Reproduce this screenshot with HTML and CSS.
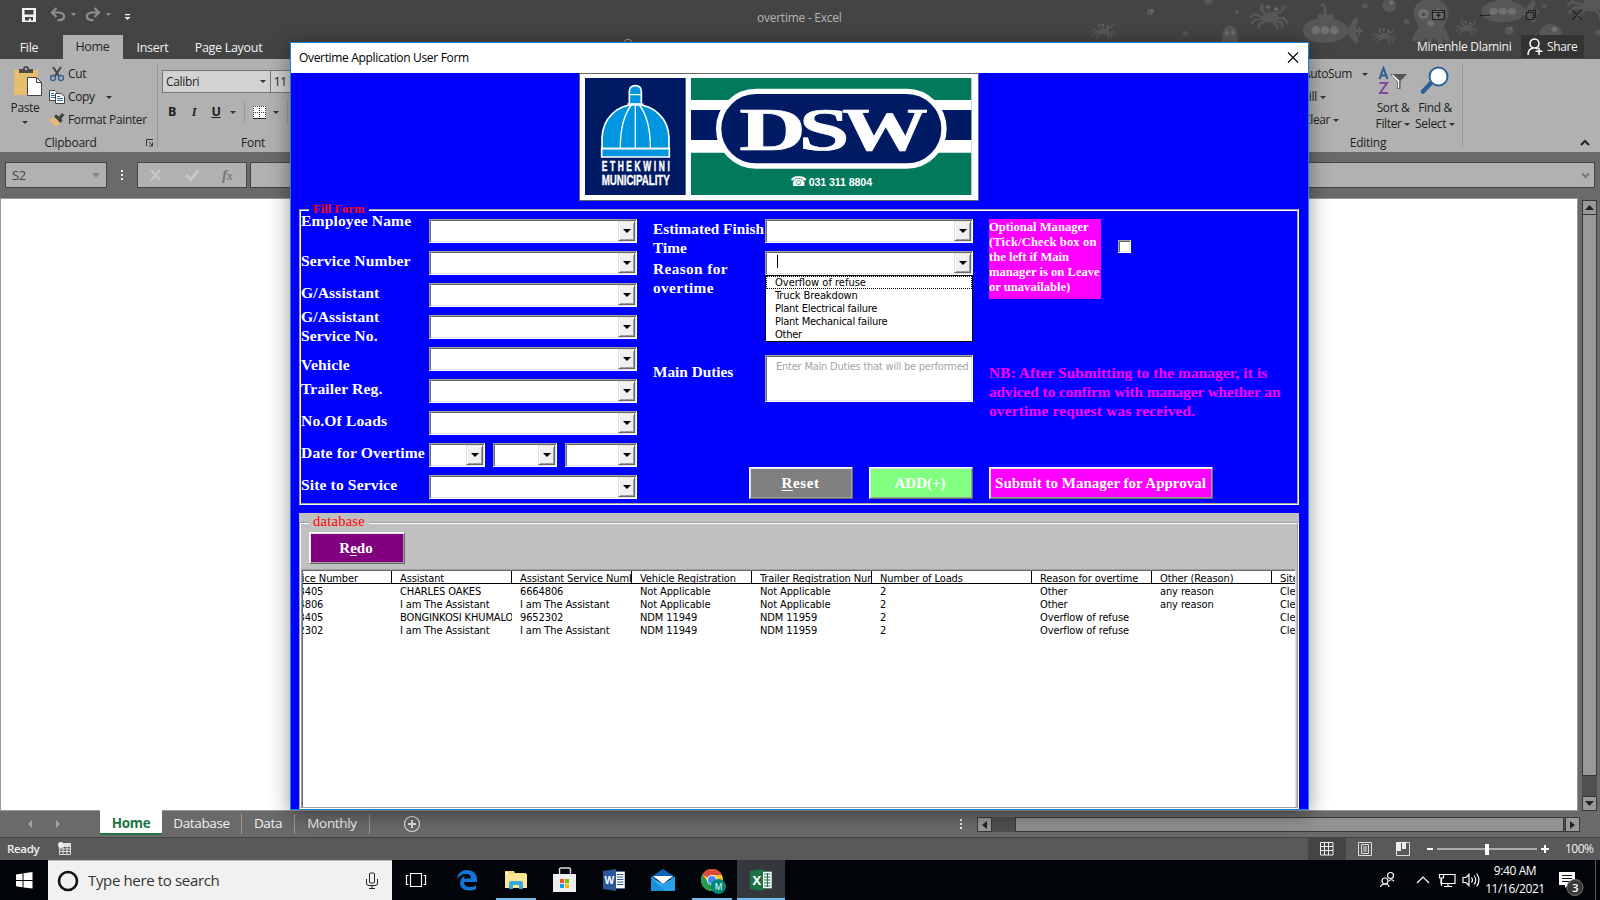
FILE: index.html
```html
<!DOCTYPE html>
<html lang="en">
<head>
<meta charset="utf-8">
<title>overtime - Excel</title>
<link rel="stylesheet" href="styles.css">
</head>
<body>
<div class="desktop">
  <header class="titlebar">
    <svg class="sea" viewBox="0 0 1568 189" preserveAspectRatio="none">
      <defs>
        <g id="crab"><ellipse cx="0" cy="0" rx="22" ry="15"/><path d="M-16-8-30-22-28-40-18-44-22-34-14-38-20-24-10-10ZM16-8 32-14 46-34 38-40 40-30 32-34 30-22 12-12Z"/><path d="M-16 2-46-10-58 2M-16 6-42 6-54 20M-12 10-30 20-34 34M14 4 38 2 48 18M12 8 32 16 34 32M8 12 20 26 18 38" fill="none" stroke="#575757" stroke-width="7"/><circle cx="-6" cy="-30" r="6" fill="#666"/><circle cx="16" cy="-24" r="6" fill="#666"/><path d="M-6-28-3-8M15-22 8-8" stroke="#575757" stroke-width="4"/></g>
        <g id="sub"><path d="M-64 0C-60-34-20-36 0-36 34-36 54-22 62-8L80-36C92-44 96-30 86-12V12C96 30 92 44 80 36L60 12C46 30 20 38 0 38-40 38-62 26-64 0ZM-22-34V-48H22V-34Z"/><path d="M-2-46V-62Q0-76-14-78" fill="none" stroke="#575757" stroke-width="8"/><path d="M84-3H92V-12H96V-3H104V5H96V16H91V5H84Z"/><circle cx="-28" cy="0" r="12" fill="#707070"/><circle cx="-2" cy="0" r="12" fill="#707070"/><circle cx="24" cy="0" r="12" fill="#707070"/></g>
      </defs>
      <g fill="#575757">
        <circle cx="309" cy="36" r="10"/><circle cx="471" cy="2" r="12"/><circle cx="552" cy="35" r="6"/><circle cx="407" cy="100" r="7"/><circle cx="910" cy="18" r="8"/><circle cx="978" cy="16" r="20"/><circle cx="1026" cy="65" r="8"/><circle cx="1412" cy="18" r="7"/><circle cx="1314" cy="92" r="13"/><circle cx="1430" cy="104" r="32"/><circle cx="1564" cy="98" r="9"/>
        <use href="#crab" transform="translate(180 94) scale(.62)"/>
        <use href="#crab" transform="translate(645 52)"/>
        <use href="#crab" transform="translate(966 108) scale(.62)"/>
        <use href="#crab" transform="translate(1196 84) scale(.58)"/>
        <use href="#crab" transform="translate(1546 16) scale(1.2)"/>
        <use href="#sub" transform="translate(800 91)"/>
        <use href="#sub" transform="translate(1298 34) scale(.98 .86)"/>
        <path d="M512 100C512 70 552 70 552 100L556 130H508ZM1046 40C1046-18 1144-18 1144 40 1144 62 1130 70 1132 86 1142 98 1148 110 1146 124 1140 134 1132 120 1124 108L1130 128 1116 132 1102 110 1096 130H1084L1082 108 1066 132 1052 128 1064 106C1056 118 1048 134 1042 122 1044 104 1056 94 1060 84 1062 70 1046 62 1046 40Z"/>
      </g>
      <g fill="#707070"><circle cx="523" cy="99" r="6"/><circle cx="540" cy="98" r="6"/><circle cx="1074" cy="42" r="15"/><circle cx="1114" cy="42" r="15"/><circle cx="1094" cy="70" r="9"/><circle cx="984" cy="8" r="6"/><circle cx="1440" cy="88" r="8"/><circle cx="1318" cy="86" r="4"/><circle cx="314" cy="32" r="4"/></g>
      <circle cx="1074" cy="43" r="5" fill="#444"/>
    </svg>
    <svg class="quick" width="140" height="35" viewBox="0 0 140 35">
      <path d="M22 8H36V22H22ZM24.500 10V14.500H33.500V10ZM25 17V20.500H29V18.500H31V20.500H33V17Z" fill="#f2f2f2" fill-rule="evenodd"/>
      <g fill="none" stroke="#8e8e8e" stroke-width="2.200"><path d="M53 12.500H59Q64 13 64 16.500T59 20.200H57.500M56.500 8 52 12.500 56.500 17"/><path d="M98 12.500H92Q87 13 87 16.500T92 20.200H93.500M94.500 8 99 12.500 94.500 17"/></g>
      <path d="M71 13H76L73.500 16ZM106 13H111L108.500 16Z" fill="#8e8e8e"/>
      <path d="M125 14H130V15.200H125ZM124.500 17H130.500L127.500 20Z" fill="#eee"/>
    </svg>
    <div class="doc-title">overtime - Excel</div>
    <svg class="winctl" width="168" height="35" viewBox="0 0 168 35" fill="none" stroke="#222" stroke-width="1.100">
      <path d="M.5 10.500H12.500V19.500H.5ZM.5 12.500H12.500M6.500 18V14M4.500 16 6.500 14 8.500 16M48 15.500H58M94.500 12.500H101.500V19.500H94.500ZM96.500 12V10.500H103.500V17.500H102M140 10 150 20M150 10 140 20"/>
    </svg>
  </header>

  <nav class="tabs">
    <span class="tab file">File</span><span class="tab home">Home</span><span class="tab insert">Insert</span><span class="tab layout">Page Layout</span>
    <svg class="bulb" width="12" height="8" viewBox="0 0 12 8"><circle cx="6" cy="6" r="4.500" fill="none" stroke="#aaa"/></svg>
    <span class="user">Minenhle Dlamini</span>
    <span class="share"><svg width="16" height="18" viewBox="0 0 16 18" fill="none" stroke="#fff" stroke-width="1.500"><circle cx="7.500" cy="5.500" r="4.500"/><path d="M1 17Q1 11 6 10M9 10Q10 10.500 10.500 11M12 9.500V17M8.500 13.200H15.500"/></svg>Share</span>
  </nav>

  <section class="ribbon">
    <div class="group clipboard">
      <div class="paste">
        <svg width="30" height="32" viewBox="0 0 30 32"><path d="M1 4H25V29H1Z" fill="#e6be6e"/><path d="M6 3H10Q10 0 13 0T16 3H20V7H6Z" fill="#4a4a4a"/><circle cx="13" cy="3" r="1.200" fill="#b1b1b1"/><path d="M14.500 11.500H23.500L28.500 16.500V29.500H14.500Z" fill="#fff" stroke="#444"/><path d="M23.500 11.500V16.500H28.500" fill="none" stroke="#444"/></svg>
        <span>Paste</span><i class="caret"></i>
      </div>
      <div class="clip-cmds">
        <div class="cmd"><svg width="16" height="16" viewBox="0 0 16 16" fill="none"><path d="M4 1 10 10M12 1 6 10" stroke="#444" stroke-width="2"/><circle cx="4" cy="12" r="2.500" stroke="#2b5f96" stroke-width="1.300"/><circle cx="12" cy="12" r="2.500" stroke="#2b5f96" stroke-width="1.300"/></svg><span class="t-cut">Cut</span></div>
        <div class="cmd"><svg width="16" height="16" viewBox="0 0 16 16"><path d="M.5 1.500H6L8.500 4V11.500H.5Z" fill="#fff" stroke="#444"/><path d="M2 4.500H5M2 6.500H6M2 8.500H6" stroke="#2b6cab"/><path d="M6.500 4.500H12L15.500 7.500V14.500H6.500Z" fill="#fff" stroke="#444"/><path d="M8 7.500H11M8 9.500H14M8 11.500H14" stroke="#2b6cab"/></svg><span class="t-copy">Copy</span><i class="caret"></i></div>
        <div class="cmd"><svg width="16" height="16" viewBox="0 0 16 16"><path d="M0 8 5 5 11 11 7 15Z" fill="#e9b974"/><path d="M5 4.500 7 2.500 10 4.500 13 1 15.500 3 12.500 6.500 13.500 9 11.500 11Z" fill="#444"/></svg><span class="t-fp">Format Painter</span></div>
      </div>
      <span class="glabel">Clipboard</span>
      <svg class="launcher" width="8" height="8" viewBox="0 0 8 8" fill="none" stroke="#333"><path d="M.5 7V.5H7M3 3 6.500 6.500M6.500 3.500V7H3"/></svg>
    </div>
    <div class="group fontgroup">
      <div class="fontboxes"><div class="fbox name"><span>Calibri</span><i class="caret"></i></div><div class="fbox size">11</div></div>
      <div class="styles"><b class="sb">B</b><em class="si">I</em><u class="su">U</u><i class="caret"></i><i class="vr"></i>
        <svg width="13" height="13" viewBox="0 0 13 13"><path d="M0 0H13V13H0Z" fill="#fff"/><path d="M.5 0V12M6.500 0V12M12.500 0V12M0 .5H13M0 6.500H13" stroke="#333" stroke-dasharray="1 1"/><path d="M0 12.500H13" stroke="#222"/></svg>
        <i class="caret"></i><i class="vr"></i></div>
      <span class="glabel">Font</span>
    </div>
    <div class="group editing">
      <div class="sums"><div><span class="t-sum">AutoSum</span><i class="caret wide"></i></div><div><span class="t-fill">Fill</span><i class="caret"></i></div><div><span class="t-clear">Clear</span><i class="caret"></i></div></div>
      <div class="big sort">
        <svg width="30" height="29" viewBox="0 0 30 29"><path d="M1.500 13 5.500 2 9.500 13M3 9.500H8" fill="none" stroke="#2b5f96" stroke-width="2"/><path d="M1.500 17H9L2 27H10" fill="none" stroke="#7d4a9c" stroke-width="2"/><path d="M12 8H29L22.500 15V23H19V15Z" fill="#555"/><path d="M12.500 8.500 19.500 15.500V22.500H21.500V14.500L15 8.500Z" fill="#fff" stroke="#555" stroke-width=".6"/></svg>
        <span>Sort &amp;</span><span>Filter <i class="caret"></i></span>
      </div>
      <div class="big find">
        <svg width="30" height="29" viewBox="0 0 30 29"><path d="M11 17 3 25.500" stroke="#2b5f96" stroke-width="4.500" stroke-linecap="round"/><circle cx="18.500" cy="10.500" r="9" fill="#fff" stroke="#2b6299" stroke-width="2"/></svg>
        <span>Find &amp;</span><span>Select <i class="caret"></i></span>
      </div>
      <span class="glabel">Editing</span>
    </div>
    <svg class="collapse" width="10" height="8" viewBox="0 0 10 8"><path d="M1 6 5 2 9 6" fill="none" stroke="#222" stroke-width="2"/></svg>
  </section>

  <section class="formula">
    <div class="namebox"><span>S2</span><i class="tri"></i></div>
    <div class="dots"><i></i><i></i><i></i></div>
    <div class="fxbox"><svg width="108" height="24" viewBox="0 0 108 24" fill="none" stroke="#c8c8c8" stroke-width="2"><path d="M13 7 22 17M22 7 13 17"/><path d="M48 12 53 16.500 60 7.500" stroke-width="3"/></svg><em class="fx">f<small>x</small></em></div>
    <div class="fbar"><svg width="9" height="7" viewBox="0 0 9 7"><path d="M1 1.500 4.500 5 8 1.500" fill="none" stroke="#777" stroke-width="2"/></svg></div>
  </section>

  <section class="work">
    <div class="sheet"></div>
    <div class="vscroll"><div class="sbtn"><svg width="9" height="5"><path d="M0 5 4.500 0 9 5Z" fill="#222"/></svg></div><div class="thumb"></div><div class="gutter"></div><div class="sbtn"><svg width="9" height="5"><path d="M0 0 4.500 5 9 0Z" fill="#222"/></svg></div></div>
  </section>

  <section class="sheettabs">
    <svg class="navs" width="100" height="27" viewBox="0 0 100 27"><path d="M32 9V17L28 13ZM56 9V17L60 13Z" fill="#a0a0a0"/></svg>
    <span class="stab on">Home</span><span class="stab db">Database</span><span class="stab dt">Data</span><span class="stab mo">Monthly</span>
    <svg class="plus" width="18" height="18" viewBox="0 0 18 18" fill="none" stroke="#e0e0e0"><circle cx="9" cy="9" r="7.500" stroke-width="1.200"/><path d="M9 5V13M5 9H13" stroke-width="2"/></svg>
    <div class="dots hd"><i></i><i></i><i></i></div>
    <div class="hscroll"><div class="sbtn"><svg width="5" height="8"><path d="M5 0 0 4 5 8Z" fill="#222"/></svg></div><div class="hgut"></div><div class="hthumb"></div><div class="sbtn"><svg width="5" height="8"><path d="M0 0 5 4 0 8Z" fill="#222"/></svg></div></div>
  </section>

  <footer class="status">
    <span class="ready">Ready</span>
    <svg class="macro" width="14" height="14" viewBox="0 0 14 14"><path d="M1.500 4.500H12.500V12.500H1.500ZM1.500 7H12.500M1.500 9.500H12.500M5 5V12.500M9 5V12.500" fill="none" stroke="#ddd"/><path d="M6 1H13V5H6Z" fill="#ddd"/><circle cx="3" cy="3" r="3" fill="#eee"/></svg>
    <div class="views">
      <div class="view sel"><svg width="14" height="14" viewBox="0 0 14 14" fill="none" stroke="#eee"><path d="M.5 .5H13V13H.5ZM.5 4.500H13M.5 8.500H13M4.500 .5V13M8.500 .5V13"/></svg></div>
      <div class="view"><svg width="14" height="14" viewBox="0 0 14 14" fill="none" stroke="#ddd"><path d="M.5 .5H13.500V13.500H.5ZM3.500 2.500H10.500V11.500H3.500ZM5 5H9M5 7H9M5 9H9"/></svg></div>
      <div class="view"><svg width="14" height="14" viewBox="0 0 14 14"><path d="M.5 .5H13.500V13.500H.5Z" fill="none" stroke="#ddd"/><path d="M0 0H5V9H0ZM6 0H10V7H6Z" fill="#eee"/></svg></div>
    </div>
    <svg class="zoom" width="126" height="22" viewBox="0 0 126 22"><path d="M1 10H7V12H1ZM11 10.500H111V11.500H11ZM59 6H63V17H59ZM115 10H123V12H115ZM118 7H120V15H118Z" fill="#fff"/></svg>
    <span class="pct">100%</span>
  </footer>

  <div class="taskbar">
    <div class="start"><svg width="17" height="17" viewBox="0 0 17 17" fill="#fff"><path d="M0 2.500 6.500 1.500V8H0ZM7.500 1.300 16.500 0V8H7.500ZM0 9H6.500V15.300L0 14.300ZM7.500 9H16.500V16.500L7.500 15.400Z"/></svg></div>
    <div class="search"><svg width="24" height="24" viewBox="0 0 24 24"><circle cx="12" cy="12" r="9" fill="none" stroke="#111" stroke-width="2.600"/></svg><span>Type here to search</span>
      <svg class="mic" width="12" height="18" viewBox="0 0 12 18" fill="none" stroke="#222"><rect x="3.500" y="1" width="5" height="10" rx="1"/><path d="M.5 7V11Q.5 13.500 3 13.500H9Q11.500 13.500 11.500 11V7M6 13.500V16.500M3 16.500H9"/></svg></div>
    <div class="task tv"><svg width="22" height="16" viewBox="0 0 22 16" fill="none" stroke="#fff" stroke-width="1.200"><path d="M5.500 1.500H16.500V14.500H5.500ZM3.500 3.500H1.500V12.500H3.500M18.500 3.500H20.500V12.500H18.500"/></svg></div>
    <div class="task"><svg width="22" height="22" viewBox="0 0 22 22"><path d="M1 10C2 4 6 1 11 1 17 1 21 5 21 10V13H8C8 16 10 18 14 18 16 18 18 17.500 20 16.500V20C18 21 16 21.500 13 21.500 7 21.500 4 18 4 14 4 11 6 8 9 7 8 8 8 9 8 9.500H15C15 6 13 5 10 5 6 5 3 7 1 10Z" fill="#0f78d7"/></svg></div>
    <div class="task run"><svg width="22" height="20" viewBox="0 0 22 20"><path d="M0 1H9L10 3H21V18H0Z" fill="#f7d774"/><path d="M0 4H22V18H0Z" fill="#ffe694"/><path d="M1 2H3V4H1Z" fill="#fff"/><path d="M4 19V13Q4 11 6 11H16Q18 11 18 13V19H14V15H8V19Z" fill="#35a9e1"/></svg></div>
    <div class="task"><svg width="24" height="26" viewBox="0 0 24 26"><path d="M6.500 7V2Q6.500 1 8 1H16Q17.500 1 17.500 2V7" fill="none" stroke="#ddd" stroke-width="1.400"/><path d="M0 7H23V25H0Z" fill="#eee"/><path d="M7 12H11V16H7Z" fill="#f25022"/><path d="M12 12H16V16H12Z" fill="#7fba00"/><path d="M7 17H11V21H7Z" fill="#00a4ef"/><path d="M12 17H16V21H12Z" fill="#ffb900"/></svg></div>
    <div class="task"><svg width="22" height="22" viewBox="0 0 22 22"><path d="M12 2.500H22V19.500H12Z" fill="#fff" stroke="#2b579a" stroke-width=".6"/><path d="M14 5.500H20.500M14 8H20.500M14 10.500H20.500M14 13H20.500M14 15.500H20.500" stroke="#2b579a"/><path d="M0 2 13 0V22L0 20Z" fill="#2b579a"/><text x="1.500" y="15" class="badge-w">W</text></svg></div>
    <div class="task"><svg width="24" height="23" viewBox="0 0 24 23"><path d="M0 8 12 0 24 8V10H0Z" fill="#0a64b8"/><path d="M2 7H22L12 15Z" fill="#fff"/><path d="M0 8 12 15 24 8V22H0Z" fill="#35b5ef"/><path d="M0 22 24 8V22Z" fill="#2aa0e8"/><path d="M0 8 14 22H0Z" fill="#1c8ee0"/></svg></div>
    <div class="task run"><svg class="chrome" width="26" height="26" viewBox="0 0 26 26"><circle cx="11" cy="11" r="11" fill="#f7c72c"/><path d="M11 11 1.500 5.500A11 11 0 0 1 21 6H11Z" fill="#db4a3a"/><path d="M1.500 5.500A11 11 0 0 0 11 22L15 13.500 7 13Z" fill="#279b55"/><circle cx="11" cy="11" r="5" fill="#fff"/><circle cx="11" cy="11" r="4" fill="#4687f1"/><circle cx="17.500" cy="17.500" r="7.500" fill="#00897b"/><text x="13.700" y="21" class="badge-m">M</text></svg></div>
    <div class="task run active"><svg width="22" height="22" viewBox="0 0 22 22"><path d="M12 2.500H22V19.500H12Z" fill="#fff" stroke="#217346" stroke-width=".6"/><path d="M14 5H20.500M14 8H20.500M14 11H20.500M14 14H20.500M14 17H20.500M17.500 4V18" stroke="#217346"/><path d="M0 2 13 0V22L0 20Z" fill="#1f7244"/><text x="2.500" y="15.500" class="badge-x">X</text></svg></div>
    <div class="tray">
      <svg width="162" height="40" viewBox="0 0 162 40" fill="none" stroke="#fff" stroke-width="1.200"><circle cx="10.500" cy="15.500" r="3"/><circle cx="5" cy="21" r="3"/><path d="M.5 27Q1 24 5 24T9 27M9 21Q11 18.500 14 21"/><path d="M37 23 43 17 49 23"/><path d="M64 14.500H75V23.500H61V19M68 23.500V26.500M64 26.500H72M59.500 14.500H63.500V18H59.500ZM61.500 18V26"/><path d="M83 17.500H86L89 14.500V25.500L86 22.500H83ZM91.500 17.500Q93.500 20 91.500 22.500M94 15.500Q97.500 20 94 24.500M96.500 13.500Q101.500 20 96.500 26.500"/></svg>
      <div class="clock"><span class="time">9:40 AM</span><span class="date">11/16/2021</span></div>
      <svg class="notif" width="26" height="28" viewBox="0 0 26 28"><path d="M0 3H16V16H9L6 19V16H0Z" fill="#fff"/><path d="M3 6.500H13M3 9.500H13M3 12.500H10" stroke="#111"/><circle cx="16" cy="18.500" r="8" fill="#383838" stroke="#777"/><text x="13" y="22.500" class="badge-3">3</text></svg>
    </div>
    <i class="peek"></i>
  </div>

  <main class="dialog">
    <div class="dlg-title"><span>Overtime Application User Form</span><svg width="12" height="12" viewBox="0 0 12 12"><path d="M1 .5 11 10.500M11 .5 1 10.500" stroke="#000" stroke-width="1.100"/></svg></div>
    <svg class="logo" width="400" height="128" viewBox="27 39 1200 384">
      <path d="M28.500 40.500H1225.500V421.500H28.500Z" fill="#fff" stroke="#666" stroke-width="3"/>
      <path d="M45 54H347V405H45Z" fill="#001b63"/>
      <path d="M363 54H1204V405H363Z" fill="#007a5b"/>
      <path d="M363 120H1204V278H363Z" fill="#fff"/><path d="M363 150H1204V240H363Z" fill="#001b63"/>
      <rect x="446" y="94" width="676" height="224" rx="112" fill="#001b63" stroke="#fff" stroke-width="16"/>
      <g fill="#0095df" stroke="#fff" stroke-width="5"><path d="M178 134V94Q178 77 196 77T214 94V134ZM96 266V234C98 176 140 134 196 134S296 176 297 234V266Z"/><path d="M95 266H298V291H95Z"/><path d="M178 104H214M196 134V266M184 135Q150 180 151 266M208 135Q242 180 241 266M172 132H220" fill="none" stroke-width="4"/></g>
      <text transform="translate(95 334) scale(.6 1)" x="0" y="0" class="lg-eth" textLength="340" lengthAdjust="spacing">ETHEKWINI</text>
      <text x="95" y="374" class="lg-mun" textLength="204" lengthAdjust="spacingAndGlyphs">MUNICIPALITY</text>
      <text x="508" y="269" class="lg-dsw" textLength="199" lengthAdjust="spacingAndGlyphs">D</text><text x="686" y="269" class="lg-dsw" textLength="152" lengthAdjust="spacingAndGlyphs">S</text><text x="816" y="269" class="lg-dsw" textLength="257" lengthAdjust="spacingAndGlyphs">W</text>
      <text x="661" y="378" class="lg-ph">☎</text>
      <text x="716" y="378" class="lg-tel" textLength="190" lengthAdjust="spacingAndGlyphs">031 311 8804</text>
    </svg>

    <section class="frame form">
      <span class="legend fill">Fill Form</span>
      <div class="cola">
        <div class="row"><label class="up">Employee Name</label><div class="combo"><i></i></div></div>
        <div class="row"><label>Service Number</label><div class="combo"><i></i></div></div>
        <div class="row"><label>G/Assistant</label><div class="combo"><i></i></div></div>
        <div class="row"><label class="up">G/Assistant<br>Service No.</label><div class="combo"><i></i></div></div>
        <div class="row"><label class="down">Vehicle</label><div class="combo"><i></i></div></div>
        <div class="row"><label>Trailer Reg.</label><div class="combo"><i></i></div></div>
        <div class="row"><label>No.Of Loads</label><div class="combo"><i></i></div></div>
        <div class="row"><label>Date for Overtime</label><div class="dates"><div class="combo d1"><i></i></div><div class="combo d2"><i></i></div><div class="combo d3"><i></i></div></div></div>
        <div class="row"><label>Site to Service</label><div class="combo"><i></i></div></div>
      </div>
      <div class="colb">
        <div class="row"><label class="tight">Estimated Finish<br>Time</label><div class="combo"><i></i></div></div>
        <div class="row"><label class="down loose">Reason for<br>overtime</label><div class="combo"><b class="cursor"></b><i></i>
          <ul class="options"><li class="focus">Overflow of refuse</li><li>Truck Breakdown</li><li>Plant Electrical failure</li><li>Plant Mechanical failure</li><li>Other</li></ul></div></div>
        <div class="row duties"><label class="down">Main Duties</label><div class="area">Enter Main Duties that will be performed</div></div>
        <div class="btns"><button class="btn reset"><span><u>R</u>eset</span></button><button class="btn add">ADD(+)</button></div>
      </div>
      <div class="colc">
        <div class="opt"><p>Optional Manager<br><span>(Tick/Check box on</span><br>the left if Main<br>manager is on Leave<br>or unavailable)</p><div class="check"></div></div>
        <p class="nb"><span>NB: After Submitting to the manager, it is</span><br>adviced to confirm with manager whether an<br><span class="wide">overtime request was received.</span></p>
        <button class="btn submit">Submit to Manager for Approval</button>
      </div>
    </section>

    <section class="dbpanel"><div class="frame dbframe">
      <span class="legend dbl">database</span>
      <button class="btn redo"><span>R<u>e</u>do</span></button>
      <div class="list"><div class="grid">
        <div class="r head"><span>Service Number</span><span>Assistant</span><span>Assistant Service Number</span><span>Vehicle Registration</span><span>Trailer Registration Number</span><span>Number of Loads</span><span>Reason for overtime</span><span>Other (Reason)</span><span>Site</span></div>
        <div class="r"><span>9653405</span><span>CHARLES OAKES</span><span>6664806</span><span>Not Applicable</span><span>Not Applicable</span><span>2</span><span>Other</span><span>any reason</span><span>Clean</span></div>
        <div class="r"><span>6664806</span><span>I am The Assistant</span><span>I am The Assistant</span><span>Not Applicable</span><span>Not Applicable</span><span>2</span><span>Other</span><span>any reason</span><span>Clean</span></div>
        <div class="r"><span>9653405</span><span>BONGINKOSI KHUMALO</span><span>9652302</span><span>NDM 11949</span><span>NDM 11959</span><span>2</span><span>Overflow of refuse</span><span></span><span>Clean</span></div>
        <div class="r"><span>9652302</span><span>I am The Assistant</span><span>I am The Assistant</span><span>NDM 11949</span><span>NDM 11959</span><span>2</span><span>Overflow of refuse</span><span></span><span>Clean</span></div>
      </div></div>
    </div></section>
  </main>
</div>
</body>
</html>
```
FILE: styles.css
```css
* { box-sizing: border-box; }
body { margin: 0; }
svg { display: block; flex: none; }
p, ul { margin: 0; padding: 0; }
.desktop { position: relative; width: 1600px; height: 900px; overflow: hidden; background: linear-gradient(#444, #444) 0 0 / 1600px 59px no-repeat #6a6a6a; display: flex; flex-direction: column; font: 12px/16px "Open Sans", "Noto Sans", sans-serif; letter-spacing: -.35px; color: #222; }

/* window title */
.titlebar { position: relative; height: 35px; background: #444; display: flex; align-items: center; color: #b5b5b5; }
.sea { position: absolute; left: 1040px; top: 0; width: 560px; height: 63px; }
.doc-title { width: 1320px; padding-left: 617px; white-space: nowrap; letter-spacing: -.25px; }
.winctl { position: relative; margin-left: -28px; }
.tabs { position: relative; height: 24px; display: flex; align-items: center; color: #f2f2f2; }
.tab { text-align: center; line-height: 25px; font-size: 12.5px; letter-spacing: -.3px; }
.file { width: 63px; padding-right: 5px; }
.home { width: 60px; background: #b1b1b1; color: #262626; height: 24px; line-height: 23px; padding-right: 1px; }
.insert { width: 59px; }
.layout { width: 93px; }
.bulb { margin-left: 347px; align-self: flex-start; margin-top: 3px; }
.user { margin-left: 783px; width: 104px; white-space: nowrap; font-size: 12px; letter-spacing: -.25px; }
.share { display: flex; align-items: center; gap: 4px; width: 63px; height: 23px; background: #333; padding-left: 6px; align-self: flex-start; }

/* ribbon */
.ribbon { height: 93px; background: #b1b1b1; display: flex; position: relative; padding: 4px 0 5px; }
.caret { display: inline-block; border: 3px solid transparent; border-top-color: #333; border-bottom: 0; flex: none; }
.group { position: relative; border-right: 1px solid #999; height: 84px; display: flex; white-space: nowrap; }
.glabel { position: absolute; bottom: -4px; left: 0; right: 0; text-align: center; letter-spacing: -.25px; }
.clipboard { width: 158px; }
.clipboard .glabel { right: 16px; }
.launcher { position: absolute; right: 3px; bottom: 0; }
.paste { width: 49px; display: flex; flex-direction: column; align-items: center; padding-top: 3px; }
.paste svg { margin-left: 6px; }
.paste .caret { margin-top: 5px; }
.paste span { margin-top: 2px; height: 16px; margin-left: 1px; }
.clip-cmds { display: flex; flex-direction: column; padding-top: 0; }
.cmd { height: 23px; display: flex; align-items: center; gap: 3px; }
.cmd span { margin-top: -2px; }
.cmd svg { margin-top: -1px; }
.cmd .caret { margin-left: 8px; }
.fontgroup { width: 142px; flex-direction: column; border: 0; padding: 7px 0 0 4px; }
.fontgroup .glabel { left: 49px; right: auto; bottom: -4px; margin-left: 34px; }
.fontboxes { display: flex; }
.fbox { height: 23px; border: 1px solid #777; background: #d2d2d2; display: flex; align-items: center; padding: 0 4px 0 3px; justify-content: space-between; }
.fbox.name { width: 112px; }
.fbox.size { width: 30px; border-left: 0; }
.styles { display: flex; align-items: center; height: 22px; margin-top: 8px; }
.styles b, .styles em, .styles u { width: 22px; text-align: center; font-size: 12.500px; font-weight: 700; }
.styles em { font-family: "Liberation Serif", serif; }
.sb { margin-left: -1px; }
.styles .caret { margin-left: 3px; }
.styles svg { margin-left: 8px; }
.styles svg + .caret { margin-left: 7px; }
.vr { width: 1px; height: 21px; background: #999; margin-left: 8px; }
.editing { width: 163px; margin-left: 1000px; }
.sums { width: 74px; line-height: 23px; padding-left: 3px; flex: none; margin-top: -1px; }
.sums .caret { margin-left: 3px; vertical-align: 2px; }
.sums .wide { margin-left: 10px; }
.big { width: 42px; display: flex; flex-direction: column; align-items: center; line-height: 16px; padding-top: 3px; flex: none; }
.big svg { margin-bottom: 5px; }
.big .caret { vertical-align: 2px; }
.sort { margin-left: 0; width: 38px; }
.find { width: 46px; }
.editing .glabel { left: -26px; right: 0; padding-left: 0; }
.collapse { position: absolute; right: 10px; top: 80px; }

/* formula bar */
.formula { height: 46px; display: flex; padding: 10px 5px 10px; }
.namebox, .fxbox, .fbar { height: 26px; border: 1px solid #444; background: #b1b1b1; }
.namebox { width: 102px; display: flex; align-items: center; justify-content: space-between; padding: 0 6px; font-size: 13px; color: #444; }
.tri { border: 4px solid transparent; border-top: 5px solid #888; border-bottom: 0; }
.dots { width: 30px; display: flex; flex-direction: column; align-items: center; justify-content: center; gap: 2px; }
.dots i { width: 2px; height: 2px; background: #eee; }
.fxbox { width: 110px; position: relative; }
.fx { position: absolute; left: 84px; top: 3px; font: italic 700 15px/18px "Liberation Serif", serif; color: #777; }
.fx small { font-size: 12px; }
.fbar { flex: 1; margin-left: 3px; display: flex; justify-content: flex-end; align-items: center; padding-right: 4px; }

/* worksheet */
.work { height: 613px; display: flex; }
.sheet { width: 1578px; background: #fff; border: 1px solid #999; }
.vscroll { margin: 2px 0 0 4px; width: 15px; display: flex; flex-direction: column; background: #505050; height: 611px; }
.sbtn { width: 15px; height: 15px; background: #999; border: 1px solid #383838; display: flex; align-items: center; justify-content: center; flex: none; }
.thumb { height: 562px; margin-top: -1px; background: #999; border: 1px solid #383838; }
.gutter { flex: 1; }
.sheettabs { height: 27px; display: flex; font-size: 13.500px; color: #f2f2f2; border-bottom: 1px solid #444; letter-spacing: -.35px; }
.stab { text-align: center; height: 20px; margin-top: 3px; line-height: 18px; border-right: 1px solid #999; }
.stab.on { width: 62px; margin-top: -1px; height: 25px; line-height: 27px; background: #fff; color: #217346; font-weight: 700; border: 0; border-bottom: 2px solid #217346; }
.db { width: 80px; } .dt { width: 53px; } .mo { width: 75px; }
.plus { margin: 4px 0 0 33px; }
.hd { width: 6px; margin-left: 537px; height: 25px; }
.hscroll { display: flex; margin: 6px 0 0 13px; width: 603px; height: 15px; background: #505050; }
.hgut { width: 23px; }
.hthumb { flex: 1; background: #929292; border: 1px solid #383838; margin-right: 1px; }
.status { height: 22px; background: #595959; display: flex; align-items: center; color: #f2f2f2; }
.ready { width: 50px; padding-left: 7px; font-weight: 600; font-size: 11.500px; letter-spacing: -.3px; }
.views { display: flex; height: 22px; margin-left: 1236px; }
.view { width: 38px; display: flex; align-items: center; justify-content: center; }
.sel { background: #444; }
.macro { margin-left: 8px; }
.zoom { margin-left: 4px; }
.pct { margin-left: 13px; font-size: 12px; margin-top: -1px; letter-spacing: -.5px; }

/* taskbar */
.taskbar { height: 40px; background: #010409; display: flex; color: #fff; }
.start { width: 48px; display: flex; align-items: center; justify-content: center; }
.search { width: 344px; background: #f1f1f1; border-top: 1px solid #bbb; display: flex; align-items: center; padding-left: 8px; color: #333; font-size: 15px; letter-spacing: -.35px; }
.search span { margin-left: 8px; width: 278px; margin-top: -1px; }
.task { width: 48px; margin-left: 1px; display: flex; align-items: center; justify-content: center; }
.tv { margin: 0 2px 0 0; }
.run { background: linear-gradient(#76b9ed, #76b9ed) center bottom / 40px 2px no-repeat; }
.active { background: linear-gradient(#76b9ed, #76b9ed) center bottom / 48px 2px no-repeat #34373b; }
.chrome { margin: 3px 0 0 3px; }
.badge-w { font: 700 10px "Open Sans", sans-serif; fill: #fff; }
.badge-x { font: 700 13px "Open Sans", sans-serif; fill: #fff; }
.badge-m { font: 8.500px "Open Sans", sans-serif; fill: #fff; }
.badge-3 { font: 600 11.500px "Open Sans", sans-serif; fill: #fff; }
.tray { margin-left: auto; display: flex; width: 215px; }
.tray > svg:first-child { margin-right: -60px; }
.peek { width: 1px; background: #555; margin-right: 4px; }
.clock { width: 70px; margin-left: -2px; display: flex; flex-direction: column; text-align: center; line-height: 18px; padding-top: 2px; letter-spacing: -.4px; flex: none; }
.notif { margin: 9px 0 0 9px; }

/* user form window */
.dialog { position: absolute; left: 290px; top: 42px; width: 1019px; height: 768px; border: 1px solid #1883d7; background: #00f; display: flex; flex-direction: column; box-shadow: 0 4px 20px rgba(0, 0, 0, .42); overflow: hidden; }
.dlg-title { height: 30px; background: #fff; display: flex; align-items: center; justify-content: space-between; padding: 0 9px 0 8px; color: #000; flex: none; letter-spacing: -.33px; }
.logo { margin-left: 288px; }
.frame { position: relative; border: 1px solid; border-color: #a0a0a0 #fff #fff #a0a0a0; }
.frame::before { content: ""; position: absolute; inset: 0; border: 1px solid; border-color: #fff #a0a0a0 #a0a0a0 #fff; pointer-events: none; }
.form { margin: 8px 0 0 8px; width: 1000px; height: 296px; display: flex; gap: 16px; padding: 9px 0 0 1px; font: 700 15.600px/19px "Liberation Serif", serif; letter-spacing: .12px; color: #fff; flex: none; }
.legend { position: absolute; left: 9px; padding: 0 4px; color: #f00; font-family: "Liberation Serif", serif; z-index: 1; letter-spacing: 0; }
.fill { top: -9px; height: 11px; line-height: 16px; font-size: 12.600px; background: #00f; width: 60px; white-space: nowrap; }
.cola { width: 336px; }
.row { display: flex; height: 24px; margin-bottom: 8px; white-space: nowrap; }
label { width: 128px; flex: none; }
.up { margin-top: -8px; }
.down { margin-top: 8px; }
.colb { width: 320px; font-size: 15.300px; letter-spacing: 0; }
.colb label { width: 112px; }
.colb .loose { letter-spacing: .4px; }
.combo { position: relative; width: 208px; height: 24px; background: #fff; border: 1px solid; border-color: #a0a0a0 #fff #fff #a0a0a0; box-shadow: inset 1px 1px #696969, inset -1px -1px #e3e3e3; display: flex; justify-content: flex-end; padding: 1px; flex: none; }
.combo > i { width: 17px; height: 20px; background: #f0f0f0; border: 1px solid; border-color: #e3e3e3 #696969 #696969 #e3e3e3; box-shadow: inset 1px 1px #fff, inset -1px -1px #a0a0a0; display: flex; align-items: center; justify-content: center; }
.combo > i::after { content: ""; border: 4px solid transparent; border-top-color: #000; border-bottom: 0; margin: 0 0 1px; }
.dates { display: flex; gap: 8px; }
.d1 { width: 56px; } .d2 { width: 64px; } .d3 { width: 72px; }
.cursor { width: 1px; height: 13px; background: #000; margin: 2px auto 0 10px; }
.options { position: absolute; left: -1px; top: 23px; width: 208px; height: 67px; background: #fff; border: 1px solid #000; list-style: none; font: 11px/13px "DejaVu Sans Condensed", "DejaVu Sans", sans-serif; letter-spacing: 0; color: #000; }
.options li { height: 13px; padding-left: 9px; line-height: 14px; }
.options li:nth-child(2) { letter-spacing: -.1px; }
.options li:nth-child(n+3) { letter-spacing: -.24px; }
.focus { outline: 1px dotted #000; outline-offset: -1px; }
.duties { margin-top: 80px; height: 47px; }
.duties .down { margin-top: 7px; }
.area { width: 208px; background: #fff; border: 1px solid; border-color: #a0a0a0 #fff #fff #a0a0a0; box-shadow: inset 1px 1px #696969, inset -1px -1px #e3e3e3; font: 11px/13px "DejaVu Sans Condensed", sans-serif; letter-spacing: -.22px; color: #a5a5a5; padding: 4px 0 0 10px; }
.btns { margin-top: 65px; display: flex; gap: 16px; justify-content: flex-end; }
.btn { height: 32px; border: 1px solid; border-color: #fff #696969 #696969 #fff; box-shadow: inset 1px 1px #e3e3e3, inset -1px -1px #a0a0a0; color: #fff; font: 700 15px/20px "Liberation Serif", serif; padding: 0 0 1px; border-radius: 0; white-space: nowrap; }
.btn u { text-underline-offset: 2px; }
.reset { background: #808080; width: 104px; letter-spacing: .6px; padding-right: 1px; }
.add { background: #80ff80; width: 104px; padding-right: 2px; }
.submit { background: #f0f; width: 224px; margin-top: 47px; display: block; padding-right: 1px; }
.colc { white-space: nowrap; letter-spacing: 0; }
.opt { display: flex; height: 80px; }
.opt p { width: 112px; background: #f0f; font-size: 12.600px; line-height: 15px; padding-top: 1px; }
.opt span { letter-spacing: .12px; }
.check { width: 13px; height: 13px; margin: 21px 0 0 17px; background: #fff; border: 1px solid; border-color: #a0a0a0 #fff #fff #a0a0a0; box-shadow: inset 1px 1px #696969, inset -1px -1px #e3e3e3; }
.nb { margin-top: 64px; color: #f0f; font-size: 15.200px; }
.nb span { letter-spacing: .18px; }
.nb .wide { letter-spacing: .26px; }
.dbpanel { margin: 8px 0 0 8px; width: 1000px; height: 296px; background: #c0c0c0; padding-top: 9px; flex: none; }
.dbframe { height: 287px; padding: 9px 0 0 1px; }
.dbl { top: -9px; height: 18px; line-height: 15px; font-size: 14.400px; letter-spacing: .3px; width: 60px; background: #c0c0c0; }
.redo { background: #800080; width: 96px; margin-left: 8px; display: block; padding-right: 2px; }
.list { margin-top: 5px; width: 995px; height: 239px; background: #fff; border: 1px solid; border-color: #a0a0a0 #e3e3e3 #a0a0a0 #a0a0a0; box-shadow: inset 1px 1px #696969; overflow: hidden; padding: 1px 0 0 1px; }
.grid { overflow: hidden; width: 992px; font: 11px/13px "DejaVu Sans Condensed", "DejaVu Sans", sans-serif; letter-spacing: -.11px; color: #000; }
.r { display: grid; grid-template-columns: 120px 120px 120px 120px 120px 160px 120px 120px 120px; margin-left: -31px; height: 13px; white-space: nowrap; }
.r span { overflow: hidden; padding-left: 8px; height: 13px; line-height: 15px; }
.head { width: 1120px; border-bottom: 1px solid #000; }
.r.head span { border-right: 1px solid #000; line-height: 15px; height: 12px; }

/* logo lettering */
.lg-eth { font: 700 42px "Liberation Sans", sans-serif; fill: #fff; stroke: #fff; stroke-width: 1.5px; }
.lg-mun { font: 700 42px "Liberation Sans", sans-serif; fill: #fff; stroke: #fff; }
.lg-dsw { font: 700 182px "Liberation Serif", serif; fill: #fff; stroke: #fff; stroke-width: 2px; }
.lg-ph { font: 40px "DejaVu Sans", sans-serif; fill: #fff; }
.lg-tel { font: 700 32px "Liberation Sans", sans-serif; fill: #fff; }
```
